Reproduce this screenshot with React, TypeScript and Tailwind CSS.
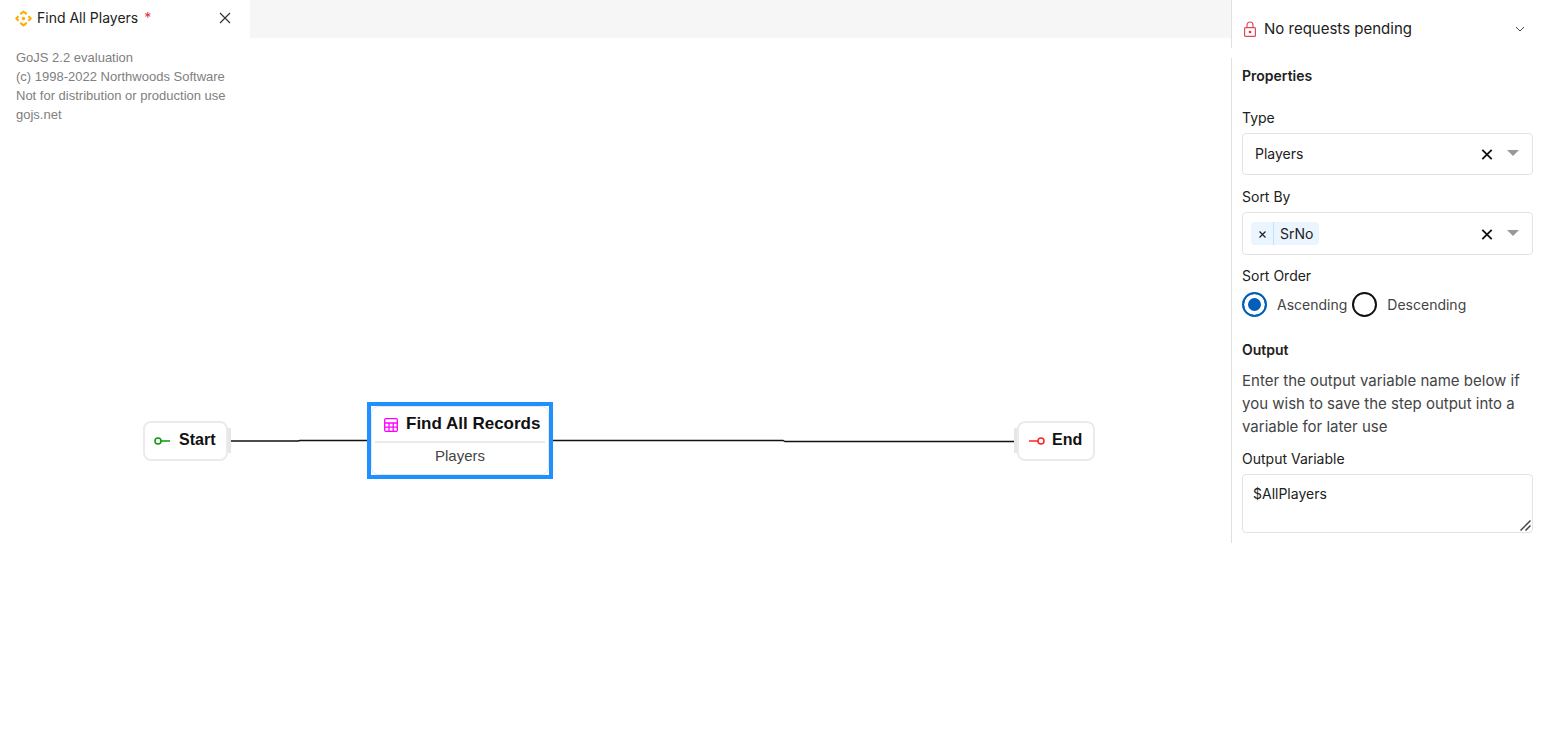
import React, { useState } from 'react'

function FlowIcon() {
  return (
    <svg className="h-[17px] w-[17px] shrink-0" viewBox="0 0 17 17" fill="none" stroke="#ffab00" strokeWidth="2" strokeLinejoin="round" aria-hidden="true">
      <path d="M5.300 4.100 8.500 1.600l3.200 2.500M5.300 12.900l3.200 2.500 3.200-2.500M3.500 6.200 1.300 8.500l2.200 2.300M13.500 6.200l2.200 2.300-2.200 2.300" />
      <circle cx="8.500" cy="8.500" r="1.700" fill="#ffab00" stroke="none" />
    </svg>
  )
}

function LockIcon() {
  return (
    <svg className="h-4 w-3 shrink-0" viewBox="0 0 12 16" fill="none" stroke="#e0485a" strokeWidth="1.200" aria-hidden="true">
      <rect x=".6" y="6.600" width="10.800" height="8.800" rx="1" />
      <path d="M3 6.500V4a3 3 0 0 1 6 0v2.500" />
      <circle cx="6" cy="11" r="1.300" fill="#dc2f45" stroke="none" />
    </svg>
  )
}

function CrossIcon() {
  return (
    <svg className="h-3 w-3" viewBox="0 0 12 12" stroke="#111" strokeWidth="1.800" aria-hidden="true">
      <path d="m1.300 1.800 9.400 9.400m0-9.400-9.400 9.400" />
    </svg>
  )
}

function Caret() {
  return (
    <svg className="mb-[2px] h-[6px] w-3 shrink-0" viewBox="0 0 12 6" fill="#999" aria-hidden="true">
      <path d="M0 0h12L6 6z" />
    </svg>
  )
}

function TabBar() {
  return (
    <div className="flex h-[38px] bg-[#f6f6f6]">
      <div className="flex w-[250px] items-center bg-white pr-[17px] pb-[2px] pl-[15px] text-sm">
        <FlowIcon />
        <span className="ml-[5px]">Find All Players</span>
        <span className="ml-[6px] text-[#dc3545]">*</span>
        <button type="button" aria-label="Close tab" className="ml-auto flex h-4 w-4 items-center justify-center">
          <svg className="h-3 w-3" viewBox="0 0 12 12" stroke="#333" strokeWidth="1.200" aria-hidden="true">
            <path d="m1 1 10 10M11 1 1 11" />
          </svg>
        </button>
      </div>
    </div>
  )
}

function Diagram() {
  return (
    <div className="relative h-[504px] font-['Liberation_Sans',Arial,sans-serif]">
      <p className="px-4 pt-[10px] text-[13px] leading-[19px] text-[#808080]">
        GoJS 2.2 evaluation
        <br />
        (c) 1998-2022 Northwoods Software
        <br />
        Not for distribution or production use
        <br />
        gojs.net
      </p>

      {/* links */}
      <svg className="absolute top-[398px] left-[230px] h-2 w-[785px]" viewBox="0 0 785 8" fill="none" stroke="#111" strokeWidth="1.300" aria-hidden="true">
        <path d="M0 5h68l2-.500h68M322 4.500h231l2 1h230" />
      </svg>

      {/* ports */}
      <div className="absolute top-[390px] left-[226px] h-[25px] w-[5px] bg-[#e6e6e6]" />
      <div className="absolute top-[390px] left-[1014px] h-[25px] w-[5px] bg-[#e6e6e6]" />

      <div className="absolute top-[383px] left-[143px] flex h-[40px] w-[85px] items-center rounded-lg border-2 border-[#ebebeb] bg-white pb-[2px] pl-[9px] text-base font-bold text-[#111]">
        <svg className="mt-[2px] h-2 w-4" viewBox="0 0 16 8" fill="none" stroke="#0a9a0a" strokeWidth="1.500" aria-hidden="true">
          <circle cx="4" cy="4" r="3" />
          <path d="M7 4h9" />
        </svg>
        <span className="ml-[9px]">Start</span>
      </div>

      <div className="absolute top-[364px] left-[367px] h-[77px] w-[186px] border-4 border-[#1e90ff] bg-white">
        <div className="flex h-full flex-col rounded-lg border border-[#e6e6e6] px-[3px]">
          <div className="flex h-[36px] items-center border-b-2 border-[#ebebeb] pl-[9px] text-[17px] font-bold text-[#111]">
            <svg className="mt-[2px] h-[14px] w-[14px] shrink-0" viewBox="0 0 14 14" fill="none" stroke="#f0f" strokeWidth="1.300" aria-hidden="true">
              <rect x=".7" y=".7" width="12.600" height="12.600" rx="1" />
              <path d="M.5 5h13M.5 9.200h13M5 5v8.500M9.200 5v8.500" />
            </svg>
            <span className="ml-2 whitespace-nowrap">Find All Records</span>
          </div>
          <div className="pt-px text-center text-[15px] leading-6 text-[#444]">Players</div>
        </div>
      </div>

      <div className="absolute top-[383px] left-[1017px] flex h-[40px] w-[78px] items-center rounded-lg border-2 border-[#ebebeb] bg-white pb-[2px] pl-[10px] text-base font-bold text-[#111]">
        <svg className="mt-[2px] h-2 w-4" viewBox="0 0 16 8" fill="none" stroke="#f22" strokeWidth="1.500" aria-hidden="true">
          <circle cx="12" cy="4" r="3" />
          <path d="M0 4h9" />
        </svg>
        <span className="ml-[7px]">End</span>
      </div>
    </div>
  )
}

function Properties() {
  const [type, setType] = useState('Players')
  const [sorted, setSorted] = useState(true)
  const [order, setOrder] = useState('Ascending')

  return (
    <section className="mt-[10px] border-l border-[#e0e0e0] pt-2 pr-[9px] pb-[10px] pl-[10px] text-sm leading-5">
      <h2 className="font-semibold">Properties</h2>

      <label htmlFor="type" className="mt-[22px] block">
        Type
      </label>
      <div className="mt-[5px] flex h-[42px] items-center rounded border border-[#e3e3e3] pr-[13px] pl-3">
        <select id="type" value={type} onChange={(e) => setType(e.target.value)} className="min-w-0 flex-1 appearance-none bg-transparent">
          <option>Players</option>
          <option value=""></option>
        </select>
        <button type="button" aria-label="Clear type" onClick={() => setType('')} className="mr-[14px]">
          <CrossIcon />
        </button>
        <Caret />
      </div>

      <label htmlFor="sort" className="mt-3 block">
        Sort By
      </label>
      <div className="mt-[5px] flex h-[43px] items-center rounded border border-[#e3e3e3] pr-[13px] pl-2">
        {sorted && (
          <span className="flex h-[23px] items-center rounded-sm bg-[#ebf5ff]">
            <button type="button" aria-label="Remove SrNo" onClick={() => setSorted(false)} className="flex h-full w-[23px] items-center justify-center border-r border-[#c2e0ff]">
              <svg className="mt-px h-[7px] w-[7px]" viewBox="0 0 7 7" stroke="#222" strokeWidth="1.200" aria-hidden="true">
                <path d="m.5.5 6 6m0-6-6 6" />
              </svg>
            </button>
            <span className="px-[6px]">SrNo</span>
          </span>
        )}
        <select id="sort" className="min-w-0 flex-1 appearance-none bg-transparent" onChange={() => setSorted(true)}>
          <option value=""></option>
        </select>
        <button type="button" aria-label="Clear sort" onClick={() => setSorted(false)} className="mr-[14px]">
          <CrossIcon />
        </button>
        <Caret />
      </div>

      <fieldset className="mt-[11px]">
        <legend>Sort Order</legend>
        <div className="mt-[6px] flex gap-[5px] text-[#444]">
          {['Ascending', 'Descending'].map((name) => (
            <label key={name} className="flex items-center gap-[10px]">
              <input
                type="radio"
                name="order"
                checked={order === name}
                onChange={() => setOrder(name)}
                className="h-[25px] w-[25px] appearance-none rounded-full border-2 border-[#111] bg-white checked:border-[#005fb8] checked:bg-[#005fb8] checked:shadow-[inset_0_0_0_4px_white]"
              />
              {name}
            </label>
          ))}
        </div>
      </fieldset>

      <h2 className="mt-[23px] font-semibold">Output</h2>
      <p className="mt-[9px] text-[15px] leading-[23px] text-[#444]">Enter the output variable name below if you wish to save the step output into a variable for later use</p>
      <label htmlFor="output" className="mt-[11px] block">
        Output Variable
      </label>
      <div className="relative mt-[5px]">
        <textarea
          id="output"
          defaultValue="$AllPlayers"
          className="block h-[59px] w-full rounded border border-[#e3e3e3] px-[10px] py-[9px] [&::-webkit-resizer]:bg-transparent"
        />
        {/* resize grip */}
        <svg className="pointer-events-none absolute right-[2px] bottom-[2px] h-[11px] w-[11px]" viewBox="0 0 11 11" stroke="#444" strokeWidth="1.500" aria-hidden="true">
          <path d="m.5 10.500 10-10M5.500 10.500l5-5" />
        </svg>
      </div>
    </section>
  )
}

export default function App() {
  return (
    <div className="flex min-h-screen items-start bg-white font-[Inter,sans-serif] text-[#212121]">
      <main className="min-w-0 flex-1">
        <TabBar />
        <Diagram />
      </main>
      <aside className="w-[311px] shrink-0">
        <div className="flex h-12 items-center border-l border-[#e0e0e0] pt-[10px] pr-[17px] pl-3">
          <LockIcon />
          <span className="ml-2 text-[15px]">No requests pending</span>
          <button type="button" aria-label="Show requests" className="ml-auto">
            <svg className="h-[10px] w-[10px]" viewBox="0 0 10 10" fill="none" stroke="#444" aria-hidden="true">
              <path d="m1 3 4 4 4-4" />
            </svg>
          </button>
        </div>
        <Properties />
      </aside>
    </div>
  )
}
